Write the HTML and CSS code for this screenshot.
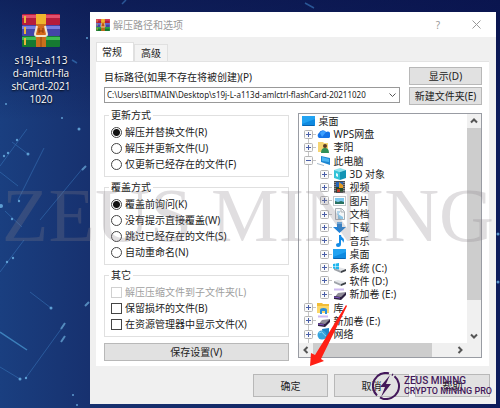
FILE: index.html
```
<!DOCTYPE html>
<html lang="zh-CN">
<head>
    <meta charset="UTF-8">
    <meta name="viewport" content="width=device-width, initial-scale=1.0">
    <title>解压路径和选项</title>
    <link rel="stylesheet" href="styles.css">
</head>
<body>
    <!-- Shared icons -->
    <svg class="defs" aria-hidden="true">
        <symbol id="rar" viewBox="0 0 38 33">
            <rect x="0" y="0" width="38" height="11" rx="1" fill="#b51c3c"/>
            <rect x="0" y="1" width="38" height="3" fill="#e2506c"/>
            <rect x="0" y="11" width="38" height="11" rx="1" fill="#4345a8"/>
            <rect x="0" y="12" width="38" height="3" fill="#7b7fe0"/>
            <rect x="0" y="22" width="38" height="11" rx="1" fill="#167a31"/>
            <rect x="0" y="23" width="38" height="3" fill="#3fbb54"/>
            <path d="M3 2v7M3 13v7M3 24v7" stroke="#e8b63c" stroke-width="2"/>
            <rect x="14" y="0" width="10" height="33" fill="#c9701c"/>
            <rect x="14" y="0" width="10" height="10" fill="#efb52c"/>
            <path d="M19 23v10" stroke="#8f4510" stroke-width="1"/>
            <path d="M15 12h8l2 10H13z" fill="#d5691b"/>
            <path d="M15 12l-2 8q0 2 2 2h8q2 0 2-2l-2-8" fill="none" stroke="#f3e6cf" stroke-width="2"/>
            <path d="M17 14v5M21 14v5M17 17h4" stroke="#8a3a0b" stroke-width="1"/>
        </symbol>
        <symbol id="desktop" viewBox="0 0 13 12">
            <rect x="0" y="1" width="13" height="10" fill="#0f8ae0"/>
            <path d="M0 1h13v3L0 9z" fill="#22a3f2"/>
            <path d="M1 10.500h11" stroke="#0a62ad"/>
        </symbol>
        <symbol id="drive" viewBox="0 0 13 12">
            <path d="M1 6l4-1 8 2-5 3z" fill="#e3e5e8"/>
            <path d="M1 6l7 3v2L1 8z" fill="#9fa4aa"/>
            <path d="M8 9l5-2v2l-5 2z" fill="#3d4248"/>
        </symbol>
        <symbol id="usb" viewBox="0 0 13 12">
            <path d="M1 1.500h10" stroke="#cdb9f0" stroke-width="2"/>
            <path d="M5 5l8-1-4 5-8 1z" fill="#8f8b98"/>
            <path d="M1 8l7 1 5-5v3l-5 5-7-1z" fill="#2c2040"/>
            <path d="M1 9l6 1" stroke="#8456c9"/>
        </symbol>
        <symbol id="plus" viewBox="0 0 9 9">
            <rect x=".5" y=".5" width="8" height="8" rx="1" fill="#fafafa" stroke="#b5b5b5"/>
            <path d="M2 4.500h5M4.500 2v5" stroke="#4a5fa8"/>
        </symbol>
    </svg>

    <div class="desktop">
        <!-- Wallpaper -->
        <svg class="wallpaper" viewBox="0 0 500 408" preserveAspectRatio="xMinYMin slice" aria-hidden="true">
            <g stroke="#3d7fc4" fill="none" opacity=".6">
                <path d="M27 129L0 166M44 148L18 200M83 168L40 220M24 240L0 272M64 325L25 379M0 172L18 186M12 142L28 154M30 292L51 308M0 367L20 379M5 211L22 227" stroke-width=".8"/>
                <path d="M0 332L27 350" stroke="#55aee6" stroke-width="1.500"/>
                <path d="M61 329l4-6M82 170l4-4M61 342l4-6M85 306l4-4" stroke="#7cc4f0" stroke-width="2"/>
                <path d="M72 60l5 3M122 4l4-4M305 3l9 5" stroke-width="1.500"/>
            </g>
            <g fill="#6fb6e8" opacity=".8">
                <circle cx="28" cy="154" r="1.500"/><circle cx="17" cy="140" r="1.200"/><circle cx="4" cy="156" r="1.200"/>
                <circle cx="8" cy="153" r="1.200"/><circle cx="1" cy="206" r="2"/><circle cx="19" cy="201" r="1.200"/>
                <circle cx="12" cy="219" r="1.200"/><circle cx="13" cy="258" r="1.200"/><circle cx="7" cy="262" r="1.200"/>
                <circle cx="51" cy="308" r="1.500"/><circle cx="20" cy="379" r="1.500"/><circle cx="26" cy="378" r="1.200"/>
                <circle cx="79" cy="129" r="1.500"/><circle cx="62" cy="118" r="1"/><circle cx="6" cy="104" r="1"/>
                <circle cx="73" cy="395" r="1"/><circle cx="77" cy="405" r="1"/><circle cx="87" cy="38" r="1"/>
                <circle cx="498" cy="234" r="1.500"/><circle cx="498" cy="282" r="1.500"/>
            </g>
        </svg>

        <!-- Desktop shortcut -->
        <div class="shortcut">
            <svg class="shortcut-icon" aria-hidden="true"><use href="#rar"/></svg>
            <span>s19j-L-a113<br>d-amlctrl-fla<br>shCard-2021<br>1020</span>
        </div>

        <!-- Extraction dialog -->
        <main class="dialog">
            <header class="titlebar">
                <svg class="title-icon" aria-hidden="true"><use href="#rar"/></svg>
                <h1>解压路径和选项</h1>
                <button class="win-btn" type="button">?</button>
                <button class="win-btn" type="button" aria-label="关闭">
                    <svg width="9" height="9" viewBox="0 0 9 9"><path d="M.5 .5l8 8M8.500 .5l-8 8" stroke="#999"/></svg>
                </button>
            </header>

            <nav class="tabs">
                <button class="tab active" type="button">常规</button>
                <button class="tab" type="button">高级</button>
            </nav>

            <section class="panel">
                <div class="path-row">
                    <div class="path">
                        <label for="path">目标路径(如果不存在将被创建)(P)</label>
                        <div class="combo">
                            <select id="path">
                                <option>C:\Users\BITMAIN\Desktop\s19j-L-a113d-amlctrl-flashCard-20211020</option>
                            </select>
                            <svg width="7" height="5" viewBox="0 0 7 5" aria-hidden="true"><path d="M.5 .5l3 3 3-3" fill="none" stroke="#555"/></svg>
                        </div>
                    </div>
                    <div class="path-buttons">
                        <button class="btn" type="button">显示(D)</button>
                        <button class="btn" type="button">新建文件夹(E)</button>
                    </div>
                </div>

                <div class="columns">
                    <div class="options">
                        <fieldset>
                            <legend>更新方式</legend>
                            <label><input type="radio" name="update" checked>解压并替换文件(R)</label>
                            <label><input type="radio" name="update">解压并更新文件(U)</label>
                            <label><input type="radio" name="update">仅更新已经存在的文件(F)</label>
                        </fieldset>
                        <fieldset>
                            <legend>覆盖方式</legend>
                            <label><input type="radio" name="overwrite" checked>覆盖前询问(K)</label>
                            <label><input type="radio" name="overwrite">没有提示直接覆盖(W)</label>
                            <label><input type="radio" name="overwrite">跳过已经存在的文件(S)</label>
                            <label><input type="radio" name="overwrite">自动重命名(N)</label>
                        </fieldset>
                        <fieldset>
                            <legend>其它</legend>
                            <label class="disabled"><input type="checkbox" disabled>解压压缩文件到子文件夹(L)</label>
                            <label><input type="checkbox">保留损坏的文件(B)</label>
                            <label><input type="checkbox">在资源管理器中显示文件(X)</label>
                        </fieldset>
                        <button class="btn save" type="button">保存设置(V)</button>
                    </div>

                    <div class="tree">
                        <ul class="tree-list">
                            <li class="root"><svg class="icon"><use href="#desktop"/></svg>桌面</li>
                            <li class="level1">
                                <button class="expander" type="button" aria-label="展开"><svg><use href="#plus"/></svg></button>
                                <svg class="icon" viewBox="0 0 13 12"><path d="M2 10a3 3 0 0 1 0-5 4 4 0 0 1 7-1 3 3 0 0 1 3 6z" fill="#1673e6"/><path d="M3 5a4 4 0 0 1 6-1L5 9z" fill="#3ea0ff"/></svg>WPS网盘
                            </li>
                            <li class="level1">
                                <button class="expander" type="button" aria-label="展开"><svg><use href="#plus"/></svg></button>
                                <svg class="icon" viewBox="0 0 13 12"><path d="M1 1h5l1 1h4v9H1z" fill="#f6d574"/><circle cx="8" cy="5" r="2" fill="#5a3a24"/><path d="M4 12q0-5 4-5t4 5z" fill="#2f8f57"/></svg>李阳
                            </li>
                            <li class="level1">
                                <button class="expander" type="button" aria-label="折叠"><svg viewBox="0 0 9 9"><rect x=".5" y=".5" width="8" height="8" rx="1" fill="#fafafa" stroke="#b5b5b5"/><path d="M2 4.500h5" stroke="#4a5fa8"/></svg></button>
                                <svg class="icon" viewBox="0 0 13 12"><path d="M4 1l9 2v7L4 7z" fill="#1c86d1"/><path d="M5 2l7 2v3L5 6z" fill="#49b4f2"/><path d="M0 8l7 2v1L0 9z" fill="#a9bccb"/></svg>此电脑
                            </li>
                            <li class="level2">
                                <button class="expander" type="button" aria-label="展开"><svg><use href="#plus"/></svg></button>
                                <svg class="icon" viewBox="0 0 13 12"><path d="M1 2l6-2 6 2-6 2z" fill="#8be4ee"/><path d="M1 2l6 2v8l-6-2z" fill="#35c4d8"/><path d="M13 2L7 4v8l6-2z" fill="#1394b4"/><path d="M3 5l2 1v3L3 8z" fill="#e4fbff"/></svg>3D 对象
                            </li>
                            <li class="level2">
                                <button class="expander" type="button" aria-label="展开"><svg><use href="#plus"/></svg></button>
                                <svg class="icon" viewBox="0 0 13 12"><rect x="1" width="11" height="12" fill="#4b4b4f"/><path d="M2 1v11M11 1v11" stroke="#c9c9c9" stroke-dasharray="1 1"/><rect x="3" y="1" width="7" height="5" fill="#2563b8"/><rect x="3" y="6" width="7" height="5" fill="#274c2b"/><path d="M6 1l4 3v3H6z" fill="#e39a23"/><path d="M4 8h3v3H4z" fill="#c03a2b"/></svg>视频
                            </li>
                            <li class="level2">
                                <button class="expander" type="button" aria-label="展开"><svg><use href="#plus"/></svg></button>
                                <svg class="icon" viewBox="0 0 13 12"><rect x=".5" y="1.500" width="12" height="9" fill="#fff" stroke="#c5c9cc"/><rect x="2" y="3" width="9" height="6" fill="#7cc8ef"/><path d="M2 6l3 1 3-1 3 1v2H2z" fill="#28705f"/></svg>图片
                            </li>
                            <li class="level2">
                                <button class="expander" type="button" aria-label="展开"><svg><use href="#plus"/></svg></button>
                                <svg class="icon" viewBox="0 0 13 12"><path d="M2.500 .5h6l3 3v8h-9z" fill="#f4f6f7" stroke="#a9afb4"/><path d="M8 1v3h3" fill="none" stroke="#a9afb4"/><path d="M4 4h3M4 6h2" stroke="#6fb2dd"/><path d="M5 6l5 3v2H5z" fill="#8cc5e6"/></svg>文档
                            </li>
                            <li class="level2">
                                <button class="expander" type="button" aria-label="展开"><svg><use href="#plus"/></svg></button>
                                <svg class="icon" viewBox="0 0 13 12"><path d="M4 1h5v5h4l-6.500 6L0 6h4z" fill="#2382d5"/><path d="M4 1h5v2H4z" fill="#68b1ec"/></svg>下载
                            </li>
                            <li class="level2">
                                <button class="expander" type="button" aria-label="展开"><svg><use href="#plus"/></svg></button>
                                <svg class="icon" viewBox="0 0 13 12"><path d="M6 0h2q0 2 2 3 2 2 0 5 0-3-2-3v4q0 3-3 3-2 0-2-2 0-2 3-2z" fill="#138be6"/></svg>音乐
                            </li>
                            <li class="level2"><button class="expander" type="button" aria-label="展开"><svg><use href="#plus"/></svg></button><svg class="icon"><use href="#desktop"/></svg>桌面</li>
                            <li class="level2">
                                <button class="expander" type="button" aria-label="展开"><svg><use href="#plus"/></svg></button>
                                <svg class="icon" viewBox="0 0 13 12"><use href="#drive"/><path d="M0 2l2.500-.5V4H0zM3 1.500L6 1v3H3zM0 4.500h2.500V7L0 6.500zM3 4.500h3v3L3 7z" fill="#1fb6ee"/></svg>系统 (C:)
                            </li>
                            <li class="level2"><button class="expander" type="button" aria-label="展开"><svg><use href="#plus"/></svg></button><svg class="icon"><use href="#drive"/></svg>软件 (D:)</li>
                            <li class="level2"><button class="expander" type="button" aria-label="展开"><svg><use href="#plus"/></svg></button><svg class="icon"><use href="#usb"/></svg>新加卷 (E:)</li>
                            <li class="level1">
                                <button class="expander" type="button" aria-label="展开"><svg><use href="#plus"/></svg></button>
                                <svg class="icon" viewBox="0 0 13 12"><path d="M0 1h5l1 1h6v9H0z" fill="#f2bd36"/><path d="M0 4h12v7H0z" fill="#fbd76a"/><path d="M3 12V8q0-2 3.500-2T10 8v4H8V9H5v3z" fill="#2c8fdb"/></svg>库
                            </li>
                            <li class="level1"><button class="expander" type="button" aria-label="展开"><svg><use href="#plus"/></svg></button><svg class="icon"><use href="#usb"/></svg>新加卷 (E:)</li>
                            <li class="level1">
                                <button class="expander" type="button" aria-label="展开"><svg><use href="#plus"/></svg></button>
                                <svg class="icon" viewBox="0 0 13 12"><path d="M5 1l7-1v9l-5 2z" fill="#1f86c9"/><circle cx="5" cy="7" r="4.500" fill="#35a3dd"/><path d="M2 5q3-2 4 0t3 3" fill="none" stroke="#8ad4f5"/></svg>网络
                            </li>
                        </ul>
                        <div class="scroll-y">
                            <svg viewBox="0 0 14 14"><path d="M4 8.500l3-3 3 3"/></svg>
                            <div class="thumb"></div>
                            <svg viewBox="0 0 14 14"><path d="M4 5.500l3 3 3-3"/></svg>
                        </div>
                        <div class="scroll-x">
                            <svg viewBox="0 0 14 14"><path d="M8.500 4l-3 3 3 3"/></svg>
                            <div class="thumb"></div>
                            <svg viewBox="0 0 14 14"><path d="M5.500 4l3 3-3 3"/></svg>
                        </div>
                    </div>
                </div>
            </section>

            <footer class="actions">
                <button class="btn" type="button">确定</button>
                <button class="btn" type="button">取消</button>
                <button class="btn" type="button">帮助</button>
            </footer>

            <!-- Arrow pointing at the OK button -->
            <svg class="arrow" viewBox="0 0 40 63" aria-hidden="true"><path d="M1 62L2 49l4 2L37 1l1 1L12 55l3 2z" fill="#ff1f14"/></svg>

            <div class="brand">
                <svg width="28" height="28" viewBox="0 0 28 28" aria-hidden="true">
                    <path d="M17 1.300A13 13 0 0 0 5 23.400M8 25.300A13 13 0 0 0 11 26.700A13 13 0 0 0 22.500 4.200M20 2.500l1 .5" fill="none" stroke="#43185a" stroke-width="2"/>
                    <path d="M18 3L8 15h5l-4 10 10-13h-5z" fill="#43185a"/>
                </svg>
                <div>
                    <p class="brand-name">ZEUS MINING</p>
                    <p class="brand-sub">CRYPTO MINING PRO</p>
                </div>
            </div>
        </main>

        <div class="watermark">ZEUS MINING</div>
    </div>
</body>
</html>
```
FILE: styles.css
```
* {
    box-sizing: border-box;
}

body {
    margin: 0;
    color: #222;
    font-family: "Noto Sans", "Noto Sans CJK SC", sans-serif;
    font-size: 10px;
    line-height: 12px;
}

button,
select {
    margin: 0;
    padding: 0;
    color: inherit;
    font: inherit;
}

svg {
    display: block;
    flex: none;
}

.defs {
    position: absolute;
    width: 0;
    height: 0;
}

/* Desktop */
.desktop {
    position: relative;
    display: flex;
    align-items: flex-start;
    min-height: 100vh;
    padding: 12px 4px 4px 0;
    overflow: hidden;
    background: linear-gradient(180deg, rgba(8, 16, 70, 0.6) 0, rgba(8, 16, 70, 0) 120px),
        linear-gradient(90deg, #1a3f80 0, #17316f 90px, #0d1c5c 100%);
}

.wallpaper {
    position: absolute;
    inset: 0;
    width: 100%;
    height: 100%;
}

.shortcut {
    position: relative;
    flex: none;
    display: flex;
    flex-direction: column;
    align-items: center;
    width: 90px;
    padding: 2px 8px 0 0;
    color: #fff;
    font-family: "Open Sans", sans-serif;
    line-height: 13px;
    text-align: center;
    text-shadow: 0 1px 2px #000;
}

.shortcut-icon {
    width: 38px;
    height: 33px;
    margin-bottom: 7px;
}

/* Dialog window */
.dialog {
    position: relative;
    flex: 1;
    min-width: 0;
    background: #f0f0f0;
}

.titlebar {
    display: flex;
    align-items: center;
    height: 25px;
    padding: 0 12px 0 6px;
    background: #fff;
    color: #999;
}

.title-icon {
    width: 14px;
    height: 12px;
}

.titlebar h1 {
    flex: 1;
    margin: 0 0 0 3px;
    font-size: 10px;
    font-weight: 400;
}

.win-btn {
    display: flex;
    align-items: center;
    justify-content: center;
    width: 16px;
    height: 16px;
    margin-left: 22px;
    border: 0;
    background: none;
}

/* Tabs */
.tabs {
    display: flex;
    align-items: flex-end;
    margin: 5px 6px 0;
}

.tab {
    width: 34px;
    height: 17px;
    border: 1px solid #e0e0e0;
    border-bottom: 0;
    background: #f3f3f3;
}

.tab.active {
    width: 38px;
    height: 19px;
    padding-right: 6px;
    background: #fff;
}

.panel {
    margin: 0 7px 0 6px;
    padding: 5px 7px 5px 8px;
    border-top: 1px solid #e3e3e3;
    background: #fff;
}

/* Buttons */
.btn {
    height: 18px;
    border: 1px solid #b8b8b8;
    background: #e1e1e1;
}

/* Destination path */
.path-row {
    display: flex;
    gap: 9px;
}

.path {
    flex: 1;
    min-width: 0;
    padding-top: 3px;
}

.path label {
    display: block;
    margin-bottom: 3px;
    line-height: 14px;
}

.combo {
    position: relative;
}

.combo select {
    display: block;
    width: 100%;
    height: 16px;
    padding: 0 16px 0 2px;
    border: 1px solid #999;
    border-radius: 0;
    background: #fff;
    appearance: none;
    font-family: "Noto Sans", sans-serif;
    font-size: 8px;
}

.combo svg {
    position: absolute;
    top: 6px;
    right: 4px;
}

.path-buttons {
    display: flex;
    flex-direction: column;
    gap: 2px;
    width: 73px;
}

/* Options on the left, folder tree on the right */
.columns {
    display: grid;
    grid-template-columns: 1fr 1fr;
    gap: 9px;
    margin-top: 4px;
}

.options {
    display: flex;
    flex-direction: column;
    gap: 4px;
}

fieldset {
    min-width: 0;
    margin: 0;
    padding: 3px 6px 4px;
    border: 1px solid #e0e0e0;
}

legend {
    margin-left: -2px;
    padding: 0 2px;
}

fieldset label {
    display: flex;
    align-items: center;
    gap: 3px;
    height: 16px;
    white-space: nowrap;
}

fieldset input {
    flex: none;
    width: 11px;
    height: 11px;
    margin: 0;
    border: 1px solid #444;
    background: #fff;
    appearance: none;
}

input[type="radio"] {
    border-radius: 50%;
}

input[type="radio"]:checked {
    background: radial-gradient(circle, #111 3px, #fff 4px);
}

input[type="checkbox"]:checked {
    background: #333;
}

.disabled {
    color: #a0a0a0;
}

.disabled input {
    border-color: #d0d0d0;
}

.save {
    margin-top: 2px;
}

/* Folder tree */
.tree {
    display: grid;
    grid-template-columns: 1fr 14px;
    grid-template-rows: 1fr 14px;
    margin: 4px 0 3px;
    border: 1px solid #999ca3;
    background: #f0f0f0;
}

.tree-list {
    position: relative;
    display: grid;
    grid-auto-rows: 1fr;
    margin: 0;
    padding: 0 0 2px;
    background: #fff;
    list-style: none;
}

/* Connecting line */
.tree-list::before {
    content: "";
    position: absolute;
    top: 16px;
    bottom: 0;
    left: 9px;
    border-left: 1px solid #c4c4c4;
}

.tree-list li {
    display: flex;
    align-items: center;
    min-height: 13px;
    white-space: nowrap;
}

.root {
    padding-left: 3px;
}

.level1 {
    padding-left: 5px;
}

.level2 {
    padding-left: 21px;
}

.icon {
    width: 13px;
    height: 12px;
    margin-right: 4px;
}

.expander {
    position: relative;
    width: 9px;
    height: 9px;
    margin-right: 4px;
    border: 0;
    background: none;
}

.expander::after {
    content: "";
    position: absolute;
    top: 4px;
    left: 9px;
    width: 3px;
    border-top: 1px solid #c4c4c4;
}

.expander svg {
    width: 9px;
    height: 9px;
}

/* Scroll bars */
.scroll-y,
.scroll-x {
    display: flex;
    justify-content: space-between;
}

.scroll-y {
    flex-direction: column;
}

.scroll-y svg,
.scroll-x svg {
    width: 14px;
    height: 14px;
    fill: none;
    stroke: #555;
    stroke-width: 2;
}

.thumb {
    background: #cdcdcd;
}

.scroll-y .thumb {
    height: 75%;
    margin-bottom: auto;
}

.scroll-x .thumb {
    width: 71%;
    margin-right: auto;
}

/* Bottom buttons */
.actions {
    display: flex;
    justify-content: flex-end;
    gap: 6px;
    padding: 8px 6px 7px;
}

.actions .btn {
    width: 75px;
    height: 23px;
}

/* Marks lying over the dialog */
.arrow {
    position: absolute;
    right: 147px;
    bottom: 37px;
    width: 40px;
    height: 63px;
}

.brand {
    position: absolute;
    right: 4px;
    bottom: 4px;
    display: flex;
    align-items: center;
    gap: 4px;
    color: #43185a;
    font-family: Roboto, sans-serif;
    font-weight: 500;
    line-height: 10px;
    white-space: nowrap;
    pointer-events: none;
}

.brand p {
    margin: 0;
}

.brand-name {
    font-size: 10px;
}

.brand-sub {
    font-size: 9px;
}

.watermark {
    position: absolute;
    top: 173px;
    right: 4px;
    left: 0;
    display: flex;
    justify-content: center;
    color: rgba(135, 128, 135, 0.26);
    font-family: "Liberation Serif", serif;
    font-size: 76px;
    line-height: 84px;
    white-space: nowrap;
    pointer-events: none;
}
```
